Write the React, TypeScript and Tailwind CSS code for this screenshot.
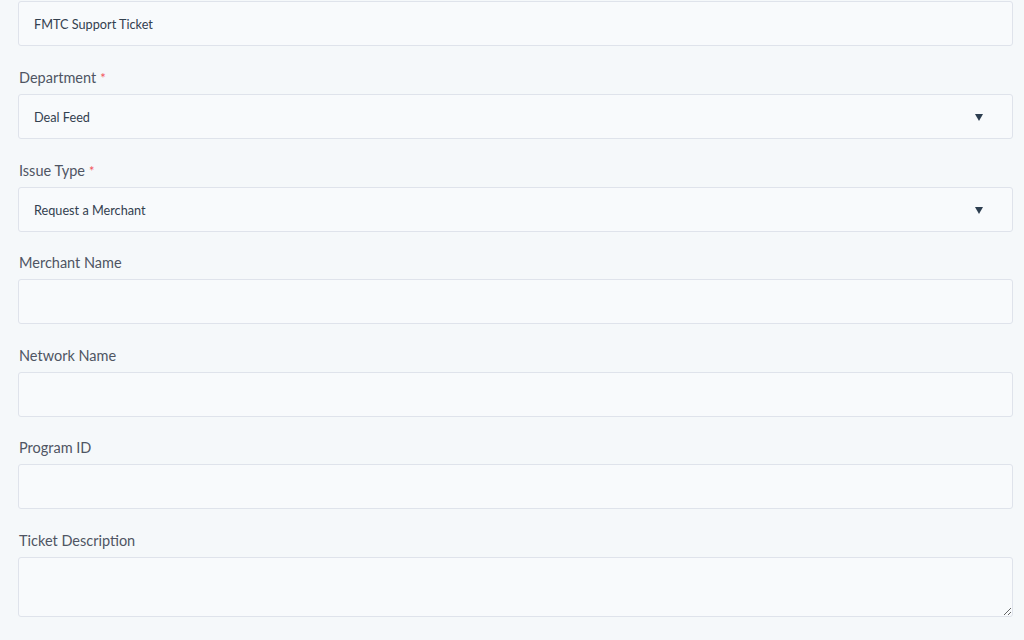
import type { ReactNode } from 'react';

const FONT = { fontFamily: 'Lato, "Open Sans", sans-serif' };

function Label({ text, required, tight }: { text: string; required?: boolean; tight?: boolean }) {
  return (
    <div
      className={`pb-[6px] pl-[1px] text-[14.5px] leading-[20px] text-[#4f5563] ${
        tight ? 'pt-[21px]' : 'pt-[22px]'
      }`}
    >
      {text}
      {required && <span className="ml-[4px] text-[13px] align-top text-[#f2545b]">*</span>}
    </div>
  );
}

function Box({ children }: { children?: ReactNode }) {
  return (
    <div className="flex h-[45px] items-center rounded-[3px] border border-[#dfe3eb] bg-[#f8fafc] pt-[2px] pl-[15px] pr-[29px] text-[12.7px] text-[#33404f]">
      {children}
    </div>
  );
}

function SelectBox({ value }: { value: string }) {
  return (
    <Box>
      <span className="flex-1">{value}</span>
      <svg width="8" height="7" viewBox="0 0 8 7">
        <path d="M0 0 H8 L4 7 Z" fill="#2d3e50" />
      </svg>
    </Box>
  );
}

export default function App() {
  return (
    <div className="min-h-[640px] w-[1024px] bg-[#f5f8fa]" style={FONT}>
      <div className="ml-[18px] w-[995px] pt-[1px]">
        <Box>FMTC Support Ticket</Box>

        <Label text="Department" required />
        <SelectBox value="Deal Feed" />

        <Label text="Issue Type" required />
        <SelectBox value="Request a Merchant" />

        <Label text="Merchant Name" tight />
        <Box />

        <Label text="Network Name" />
        <Box />

        <Label text="Program ID" tight />
        <Box />

        <Label text="Ticket Description" />
        <textarea
          className="block h-[60px] w-full resize-y rounded-[3px] border border-[#dfe3eb] bg-[#f8fafc] px-[15px] py-[10px] text-[13px] text-[#33404f] outline-none"
          defaultValue=""
        />
      </div>
    </div>
  );
}
